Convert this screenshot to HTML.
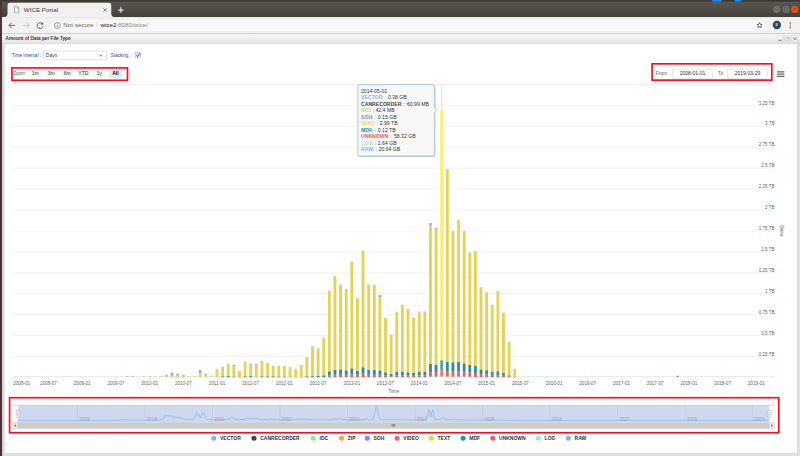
<!DOCTYPE html>
<html lang="en"><head><meta charset="utf-8"><title>WICE Portal</title>
<style>
html,body{margin:0;padding:0;width:800px;height:456px;overflow:hidden;background:#fff;}
body{font-family:"Liberation Sans",Arial,sans-serif;}
#root{position:absolute;left:0;top:0;width:1920px;height:1095px;transform:scale(0.4166667);transform-origin:0 0;overflow:hidden;background:#dfdfdf;}
#root *{box-sizing:border-box;}
.abs{position:absolute;}
.topstrip{left:0;top:0;width:1920px;height:4px;background:#3a3935;}
.titlebar{left:0;top:0px;width:1920px;height:42px;background:linear-gradient(#59564e 4px,#44423c 40px);}
.leftstrip{left:0;top:5px;width:4.8px;height:1090px;background:#4b3339;}
.tab{left:18px;top:6px;width:249px;height:35px;}
.tab .ttl{left:39px;top:8px;font-size:15px;color:#3b3b3b;white-space:nowrap;}
.toolbar{left:4.8px;top:40.5px;width:1916px;height:41px;background:#f2f1f0;border-bottom:2px solid #c0c0c0;}
.pill{left:116px;top:7px;width:1719px;height:27px;border-radius:14px;background:#f8f8f8;}
.url{left:241px;top:47px;font-size:15px;color:#222;white-space:nowrap;line-height:26px;}
.url span{color:#8a8a8a;}
.notsec{left:152px;top:47px;font-size:15px;color:#5f6368;white-space:nowrap;line-height:26px;}
.phead{left:4.8px;top:81.5px;width:1916px;border-top:1px solid #fcfcfc;height:23px;background:linear-gradient(#f6f6f6,#e4e4e4);border-bottom:1.5px solid #c4c4c4;}
.phead .t{left:8.5px;top:3px;font-size:11.3px;font-weight:bold;color:#333;white-space:nowrap;}
.pbody{left:10px;top:103.5px;width:1904px;height:984.5px;background:#fff;border:1px solid #c4c4c4;}
.lbl{font-size:11px;color:#1d4a8a;white-space:nowrap;}
.sel{left:104px;top:121.5px;width:152px;height:22px;border:1px solid #b5b8c8;background:#fff;border-radius:2px;font-size:12px;color:#444;line-height:20px;padding-left:5px;}
.cb{left:324px;top:125px;width:14px;height:14px;border:1px solid #8c9cb4;background:linear-gradient(#d8e2f0,#eef2f9);}
svg.chart{position:absolute;left:0;top:0;}
.wb{border-radius:50%;width:17px;height:17px;top:14px;}
</style></head><body>
<div id="root">
<div class="abs titlebar"></div>
<div class="abs topstrip"></div>
<div class="abs" style="left:1709px;top:0;width:23px;height:3.5px;background:#1583e9;border-radius:0 0 2px 2px"></div>
<div class="abs" style="left:1763px;top:0;width:16px;height:3.5px;background:#1583e9;border-radius:0 0 2px 2px"></div>
<div class="abs leftstrip"></div>
<div class="abs tab">
 <svg class="abs" style="left:-10px;top:0" width="269" height="35" viewBox="-10 0 269 35"><path d="M-8 35Q0 35 0 27V8Q0 0 8 0H241Q249 0 249 8V27Q249 35 257 35Z" fill="#f2f1f0"/></svg>
 <svg class="abs" style="left:15px;top:9px" width="14" height="17" viewBox="0 0 14 17"><path d="M1.5 1h7l4 4v11h-11z" fill="#fff" stroke="#666" stroke-width="1.4"/><path d="M8.5 1v4h4" fill="none" stroke="#666" stroke-width="1.2"/></svg>
 <div class="abs ttl">WICE Portal</div>
 <svg class="abs" style="left:228.5px;top:13px" width="10" height="10" viewBox="0 0 10 10"><path d="M1 1l8 8M9 1l-8 8" stroke="#555" stroke-width="1.6"/></svg>
</div>
<svg class="abs" style="left:282px;top:15.5px" width="16" height="16" viewBox="0 0 16 16"><path d="M8 1.5v13M1.500 8h13" stroke="#e2e0dc" stroke-width="3"/></svg>
<div class="abs wb" style="left:1856px;background:#74716a"></div>
<div class="abs wb" style="left:1878px;background:#74716a"></div>
<div class="abs wb" style="left:1899px;background:#e9541f"></div>
<svg class="abs" style="left:1856px;top:14px" width="60" height="17" viewBox="0 0 60 17"><path d="M5 9h7" stroke="#55524c" stroke-width="1.5"/><rect x="27" y="5" width="7" height="7" fill="none" stroke="#55524c" stroke-width="1.3"/><path d="M48.5 5.5l6 6M54.5 5.5l-6 6" stroke="#5a2410" stroke-width="1.6"/></svg>
<div class="abs toolbar"><div class="abs pill"></div></div>
<svg class="abs" style="left:15.5px;top:49.5px" width="130" height="22" viewBox="0 0 130 22" fill="none">
 <path d="M20 11H6M12 4.5L5.5 11l6.500 6.500" stroke="#4a4a4a" stroke-width="2"/>
 <path d="M40 11h14M48 4.500l6.500 6.500l-6.500 6.500" stroke="#bdbdbd" stroke-width="2"/>
 <path d="M85 6.500A7 7 0 1 0 87 13" stroke="#4a4a4a" stroke-width="2"/><path d="M87.500 3v6h-6z" fill="#4a4a4a"/>
 <circle cx="121.500" cy="11" r="7.200" stroke="#5f6368" stroke-width="1.5"/><path d="M121.500 10v5M121.500 6.500v1.600" stroke="#5f6368" stroke-width="1.6"/>
</svg>
<div class="abs notsec">Not secure</div>
<div class="abs" style="left:232px;top:52px;width:1px;height:17px;background:#c4c4c4"></div>
<div class="abs url">wice2<span>:8080/wice/</span></div>
<svg class="abs" style="left:1809.5px;top:47px" width="110" height="26" viewBox="0 0 110 26" fill="none">
 <g transform="translate(13 13.5) scale(0.72) translate(-13 -13)"><path d="M13 4.500l2.600 5.600l6 .700l-4.500 4.100l1.300 6l-5.400 -3.100l-5.400 3.100l1.300 -6l-4.500 -4.100l6 -.700z" stroke="#3c3c3c" stroke-width="2.400" stroke-linejoin="round"/></g>
 <circle cx="54.5" cy="13" r="10" fill="#2f4858"/>
 <circle cx="86.5" cy="8" r="1.700" fill="#4a4a4a"/><circle cx="86.5" cy="13.2" r="1.700" fill="#4a4a4a"/><circle cx="86.5" cy="18.4" r="1.700" fill="#4a4a4a"/>
</svg>
<div class="abs" style="left:1859px;top:53.5px;width:10px;font-size:9px;font-weight:bold;color:#cfd8dc;text-align:center;line-height:13px">E</div>
<div class="abs phead"><div class="abs t">Amount of Data per File Type</div>
 <svg class="abs" style="left:1859px;top:2px" width="58" height="18" viewBox="0 0 58 18" fill="none"><rect x=".5" y=".5" width="15" height="15" rx="2" fill="#f4f4f4" stroke="#c0c0c0"/><rect x="18.500" y=".5" width="15" height="15" rx="2" fill="#f4f4f4" stroke="#c0c0c0"/><rect x="36.500" y=".5" width="15" height="15" rx="2" fill="#f4f4f4" stroke="#c0c0c0"/><path d="M4 11.500h8" stroke="#555" stroke-width="2"/><path d="M22 6.500h6v6h-6zM24 6V4h6v6h-2" stroke="#999" stroke-width="1"/><path d="M40.500 4.500l7 7M47.500 4.500l-7 7" stroke="#555" stroke-width="1.600"/></svg>
</div>
<div class="abs pbody"></div>
<div class="abs lbl" style="left:29px;top:126px">Time Interval :</div>
<div class="abs sel">Days<svg class="abs" style="left:133px;top:7px" width="9" height="7" viewBox="0 0 9 7"><path d="M1 1l3.500 4l3.500 -4" fill="none" stroke="#333" stroke-width="1.600"/></svg></div>
<div class="abs lbl" style="left:266px;top:126px">Stacking :</div>
<div class="abs cb"><svg class="abs" style="left:1px;top:0px" width="11" height="12" viewBox="0 0 11 12"><path d="M1.500 6.500l3 3.500l5 -8.500" fill="none" stroke="#1d3f7a" stroke-width="1.800"/></svg></div>
<svg class="chart" width="1920" height="1094" viewBox="0 0 1920 1094" font-family="Liberation Sans, Arial, sans-serif">
<path d="M30 855.49H1859" stroke="#e3e3e3" stroke-width="1.2"/>
<path d="M30 805.28H1859" stroke="#e3e3e3" stroke-width="1.2"/>
<path d="M30 755.07H1859" stroke="#e3e3e3" stroke-width="1.2"/>
<path d="M30 704.86H1859" stroke="#e3e3e3" stroke-width="1.2"/>
<path d="M30 654.65H1859" stroke="#e3e3e3" stroke-width="1.2"/>
<path d="M30 604.44H1859" stroke="#e3e3e3" stroke-width="1.2"/>
<path d="M30 554.23H1859" stroke="#e3e3e3" stroke-width="1.2"/>
<path d="M30 504.02H1859" stroke="#e3e3e3" stroke-width="1.2"/>
<path d="M30 453.81H1859" stroke="#e3e3e3" stroke-width="1.2"/>
<path d="M30 403.6H1859" stroke="#e3e3e3" stroke-width="1.2"/>
<path d="M30 353.39H1859" stroke="#e3e3e3" stroke-width="1.2"/>
<path d="M30 303.18H1859" stroke="#e3e3e3" stroke-width="1.2"/>
<path d="M30 252.97H1859" stroke="#e3e3e3" stroke-width="1.2"/>
<path d="M30 202.76H1859" stroke="#e3e3e3" stroke-width="1.2"/>
<path d="M1060.06 202.76V904.0" stroke="#cccccc" stroke-width="1.4"/>
<path d="M30 904.0H1859" stroke="#ccd6eb" stroke-width="1.4"/>
<path d="M35.52 904.0v10" stroke="#ccd6eb" stroke-width="1.2"/>
<text x="52.02" y="924.0" text-anchor="middle" font-size="11" fill="#666">2008-01</text>
<path d="M116.4 904.0v10" stroke="#ccd6eb" stroke-width="1.2"/>
<text x="116.4" y="924.0" text-anchor="middle" font-size="11" fill="#666">2008-07</text>
<path d="M197.29 904.0v10" stroke="#ccd6eb" stroke-width="1.2"/>
<text x="197.29" y="924.0" text-anchor="middle" font-size="11" fill="#666">2009-01</text>
<path d="M278.17 904.0v10" stroke="#ccd6eb" stroke-width="1.2"/>
<text x="278.17" y="924.0" text-anchor="middle" font-size="11" fill="#666">2009-07</text>
<path d="M359.06 904.0v10" stroke="#ccd6eb" stroke-width="1.2"/>
<text x="359.06" y="924.0" text-anchor="middle" font-size="11" fill="#666">2010-01</text>
<path d="M439.94 904.0v10" stroke="#ccd6eb" stroke-width="1.2"/>
<text x="439.94" y="924.0" text-anchor="middle" font-size="11" fill="#666">2010-07</text>
<path d="M520.83 904.0v10" stroke="#ccd6eb" stroke-width="1.2"/>
<text x="520.83" y="924.0" text-anchor="middle" font-size="11" fill="#666">2011-01</text>
<path d="M601.71 904.0v10" stroke="#ccd6eb" stroke-width="1.2"/>
<text x="601.71" y="924.0" text-anchor="middle" font-size="11" fill="#666">2011-07</text>
<path d="M682.6 904.0v10" stroke="#ccd6eb" stroke-width="1.2"/>
<text x="682.6" y="924.0" text-anchor="middle" font-size="11" fill="#666">2012-01</text>
<path d="M763.48 904.0v10" stroke="#ccd6eb" stroke-width="1.2"/>
<text x="763.48" y="924.0" text-anchor="middle" font-size="11" fill="#666">2012-07</text>
<path d="M844.37 904.0v10" stroke="#ccd6eb" stroke-width="1.2"/>
<text x="844.37" y="924.0" text-anchor="middle" font-size="11" fill="#666">2013-01</text>
<path d="M925.25 904.0v10" stroke="#ccd6eb" stroke-width="1.2"/>
<text x="925.25" y="924.0" text-anchor="middle" font-size="11" fill="#666">2013-07</text>
<path d="M1006.14 904.0v10" stroke="#ccd6eb" stroke-width="1.2"/>
<text x="1006.14" y="924.0" text-anchor="middle" font-size="11" fill="#666">2014-01</text>
<path d="M1087.02 904.0v10" stroke="#ccd6eb" stroke-width="1.2"/>
<text x="1087.02" y="924.0" text-anchor="middle" font-size="11" fill="#666">2014-07</text>
<path d="M1167.91 904.0v10" stroke="#ccd6eb" stroke-width="1.2"/>
<text x="1167.91" y="924.0" text-anchor="middle" font-size="11" fill="#666">2015-01</text>
<path d="M1248.79 904.0v10" stroke="#ccd6eb" stroke-width="1.2"/>
<text x="1248.79" y="924.0" text-anchor="middle" font-size="11" fill="#666">2015-07</text>
<path d="M1329.68 904.0v10" stroke="#ccd6eb" stroke-width="1.2"/>
<text x="1329.68" y="924.0" text-anchor="middle" font-size="11" fill="#666">2016-01</text>
<path d="M1410.56 904.0v10" stroke="#ccd6eb" stroke-width="1.2"/>
<text x="1410.56" y="924.0" text-anchor="middle" font-size="11" fill="#666">2016-07</text>
<path d="M1491.45 904.0v10" stroke="#ccd6eb" stroke-width="1.2"/>
<text x="1491.45" y="924.0" text-anchor="middle" font-size="11" fill="#666">2017-01</text>
<path d="M1572.33 904.0v10" stroke="#ccd6eb" stroke-width="1.2"/>
<text x="1572.33" y="924.0" text-anchor="middle" font-size="11" fill="#666">2017-07</text>
<path d="M1653.22 904.0v10" stroke="#ccd6eb" stroke-width="1.2"/>
<text x="1653.22" y="924.0" text-anchor="middle" font-size="11" fill="#666">2018-01</text>
<path d="M1734.1 904.0v10" stroke="#ccd6eb" stroke-width="1.2"/>
<text x="1734.1" y="924.0" text-anchor="middle" font-size="11" fill="#666">2018-07</text>
<path d="M1814.99 904.0v10" stroke="#ccd6eb" stroke-width="1.2"/>
<text x="1814.99" y="924.0" text-anchor="middle" font-size="11" fill="#666">2019-01</text>
<text x="1859" y="853.49" text-anchor="end" font-size="11" fill="#666">0.25 TB</text>
<text x="1859" y="803.28" text-anchor="end" font-size="11" fill="#666">0.5 TB</text>
<text x="1859" y="753.07" text-anchor="end" font-size="11" fill="#666">0.75 TB</text>
<text x="1859" y="702.86" text-anchor="end" font-size="11" fill="#666">1 TB</text>
<text x="1859" y="652.65" text-anchor="end" font-size="11" fill="#666">1.25 TB</text>
<text x="1859" y="602.44" text-anchor="end" font-size="11" fill="#666">1.5 TB</text>
<text x="1859" y="552.23" text-anchor="end" font-size="11" fill="#666">1.75 TB</text>
<text x="1859" y="502.02" text-anchor="end" font-size="11" fill="#666">2 TB</text>
<text x="1859" y="451.81" text-anchor="end" font-size="11" fill="#666">2.25 TB</text>
<text x="1859" y="401.6" text-anchor="end" font-size="11" fill="#666">2.5 TB</text>
<text x="1859" y="351.39" text-anchor="end" font-size="11" fill="#666">2.75 TB</text>
<text x="1859" y="301.18" text-anchor="end" font-size="11" fill="#666">3 TB</text>
<text x="1859" y="250.97" text-anchor="end" font-size="11" fill="#666">3.25 TB</text>
<rect x="301.74" y="902.56" width="6.8" height="1.44" fill="#7cb5ec"/>
<rect x="315.22" y="902.56" width="6.8" height="1.44" fill="#7cb5ec"/>
<rect x="342.18" y="902.56" width="6.8" height="1.44" fill="#e4d354"/>
<rect x="355.66" y="902.56" width="6.8" height="1.44" fill="#e4d354"/>
<rect x="369.14" y="902.8" width="6.8" height="1.2" fill="#e4d354"/>
<rect x="382.62" y="902.8" width="6.8" height="1.2" fill="#e4d354"/>
<rect x="396.1" y="901.6" width="6.8" height="3.9" fill="#e4d354"/>
<rect x="396.1" y="899.2" width="6.8" height="2.4" fill="#7cb5ec"/>
<rect x="409.58" y="901.6" width="6.8" height="3.9" fill="#e4d354"/>
<rect x="409.58" y="894.4" width="6.8" height="7.2" fill="#7cb5ec"/>
<rect x="423.06" y="900.4" width="6.8" height="5.1" fill="#e4d354"/>
<rect x="423.06" y="896.8" width="6.8" height="3.6" fill="#7cb5ec"/>
<rect x="436.54" y="901.12" width="6.8" height="4.38" fill="#e4d354"/>
<rect x="436.54" y="899.2" width="6.8" height="1.92" fill="#7cb5ec"/>
<rect x="450.02" y="902.32" width="6.8" height="1.68" fill="#e4d354"/>
<rect x="463.51" y="902.32" width="6.8" height="1.68" fill="#e4d354"/>
<rect x="476.99" y="895.6" width="6.8" height="9.9" fill="#e4d354"/>
<rect x="476.99" y="888.4" width="6.8" height="7.2" fill="#7cb5ec"/>
<rect x="490.47" y="899.2" width="6.8" height="6.3" fill="#e4d354"/>
<rect x="490.47" y="896.8" width="6.8" height="2.4" fill="#7cb5ec"/>
<rect x="503.95" y="901.6" width="6.8" height="2.4" fill="#e4d354"/>
<rect x="517.43" y="886" width="6.8" height="19.5" fill="#e4d354"/>
<rect x="530.91" y="903.1" width="6.8" height="2.4" fill="#2b908f"/>
<rect x="530.91" y="880" width="6.8" height="23.1" fill="#e4d354"/>
<rect x="544.39" y="902.62" width="6.8" height="2.88" fill="#2b908f"/>
<rect x="544.39" y="872.8" width="6.8" height="29.82" fill="#e4d354"/>
<rect x="557.87" y="903.58" width="6.8" height="1.92" fill="#2b908f"/>
<rect x="557.87" y="878.2" width="6.8" height="25.38" fill="#e4d354"/>
<rect x="557.87" y="875.8" width="6.8" height="2.4" fill="#7cb5ec"/>
<rect x="571.35" y="904.54" width="6.8" height="0.96" fill="#2b908f"/>
<rect x="571.35" y="890.2" width="6.8" height="14.34" fill="#e4d354"/>
<rect x="584.83" y="903.1" width="6.8" height="2.4" fill="#2b908f"/>
<rect x="584.83" y="869.44" width="6.8" height="33.66" fill="#e4d354"/>
<rect x="584.83" y="868" width="6.8" height="1.44" fill="#7cb5ec"/>
<rect x="598.31" y="902.62" width="6.8" height="2.88" fill="#2b908f"/>
<rect x="598.31" y="874.72" width="6.8" height="27.9" fill="#e4d354"/>
<rect x="598.31" y="872.8" width="6.8" height="1.92" fill="#7cb5ec"/>
<rect x="611.79" y="904.3" width="6.8" height="1.2" fill="#2b908f"/>
<rect x="611.79" y="874.72" width="6.8" height="29.58" fill="#e4d354"/>
<rect x="611.79" y="872.8" width="6.8" height="1.92" fill="#7cb5ec"/>
<rect x="625.28" y="903.1" width="6.8" height="2.4" fill="#2b908f"/>
<rect x="625.28" y="868.72" width="6.8" height="34.38" fill="#e4d354"/>
<rect x="625.28" y="866.8" width="6.8" height="1.92" fill="#7cb5ec"/>
<rect x="638.76" y="903.1" width="6.8" height="2.4" fill="#2b908f"/>
<rect x="638.76" y="871" width="6.8" height="32.1" fill="#e4d354"/>
<rect x="652.24" y="903.1" width="6.8" height="2.4" fill="#2b908f"/>
<rect x="652.24" y="877.6" width="6.8" height="25.5" fill="#e4d354"/>
<rect x="665.72" y="903.58" width="6.8" height="1.92" fill="#2b908f"/>
<rect x="665.72" y="877.6" width="6.8" height="25.98" fill="#e4d354"/>
<rect x="679.2" y="903.58" width="6.8" height="1.92" fill="#2b908f"/>
<rect x="679.2" y="878.8" width="6.8" height="24.78" fill="#e4d354"/>
<rect x="692.68" y="904.06" width="6.8" height="1.44" fill="#2b908f"/>
<rect x="692.68" y="881.2" width="6.8" height="22.86" fill="#e4d354"/>
<rect x="706.16" y="904.54" width="6.8" height="0.96" fill="#2b908f"/>
<rect x="706.16" y="886" width="6.8" height="18.54" fill="#e4d354"/>
<rect x="719.64" y="904.3" width="6.8" height="1.2" fill="#2b908f"/>
<rect x="719.64" y="877.6" width="6.8" height="26.7" fill="#e4d354"/>
<rect x="719.64" y="876.4" width="6.8" height="1.2" fill="#7cb5ec"/>
<rect x="733.12" y="903.1" width="6.8" height="2.4" fill="#2b908f"/>
<rect x="733.12" y="858.4" width="6.8" height="44.7" fill="#e4d354"/>
<rect x="733.12" y="857.2" width="6.8" height="1.2" fill="#7cb5ec"/>
<rect x="746.6" y="902.62" width="6.8" height="2.88" fill="#2b908f"/>
<rect x="746.6" y="832.24" width="6.8" height="70.38" fill="#e4d354"/>
<rect x="746.6" y="830.8" width="6.8" height="1.44" fill="#7cb5ec"/>
<rect x="760.08" y="901.9" width="6.8" height="3.6" fill="#2b908f"/>
<rect x="760.08" y="835.6" width="6.8" height="66.3" fill="#e4d354"/>
<rect x="773.56" y="900.7" width="6.8" height="4.8" fill="#2b908f"/>
<rect x="773.56" y="810.4" width="6.8" height="90.3" fill="#e4d354"/>
<rect x="787.04" y="900.7" width="6.8" height="4.8" fill="#f45b5b"/>
<rect x="787.04" y="891.1" width="6.8" height="9.6" fill="#2b908f"/>
<rect x="787.04" y="697.6" width="6.8" height="193.5" fill="#e4d354"/>
<rect x="800.53" y="899.5" width="6.8" height="6" fill="#f45b5b"/>
<rect x="800.53" y="887.5" width="6.8" height="12" fill="#2b908f"/>
<rect x="800.53" y="662.8" width="6.8" height="224.7" fill="#e4d354"/>
<rect x="814.01" y="899.5" width="6.8" height="6" fill="#f45b5b"/>
<rect x="814.01" y="886.3" width="6.8" height="13.2" fill="#2b908f"/>
<rect x="814.01" y="684.4" width="6.8" height="201.9" fill="#e4d354"/>
<rect x="814.01" y="683.2" width="6.8" height="1.2" fill="#7cb5ec"/>
<rect x="827.49" y="899.5" width="6.8" height="6" fill="#f45b5b"/>
<rect x="827.49" y="888.7" width="6.8" height="10.8" fill="#2b908f"/>
<rect x="827.49" y="695.2" width="6.8" height="193.5" fill="#e4d354"/>
<rect x="827.49" y="694" width="6.8" height="1.2" fill="#7cb5ec"/>
<rect x="840.97" y="898.3" width="6.8" height="7.2" fill="#f45b5b"/>
<rect x="840.97" y="883.9" width="6.8" height="14.4" fill="#2b908f"/>
<rect x="840.97" y="628" width="6.8" height="255.9" fill="#e4d354"/>
<rect x="854.45" y="899.5" width="6.8" height="6" fill="#f45b5b"/>
<rect x="854.45" y="889.9" width="6.8" height="9.6" fill="#2b908f"/>
<rect x="854.45" y="715.6" width="6.8" height="174.3" fill="#e4d354"/>
<rect x="867.93" y="897.1" width="6.8" height="8.4" fill="#f45b5b"/>
<rect x="867.93" y="881.5" width="6.8" height="15.6" fill="#2b908f"/>
<rect x="867.93" y="601.6" width="6.8" height="279.9" fill="#e4d354"/>
<rect x="881.41" y="899.5" width="6.8" height="6" fill="#f45b5b"/>
<rect x="881.41" y="887.5" width="6.8" height="12" fill="#2b908f"/>
<rect x="881.41" y="682" width="6.8" height="205.5" fill="#e4d354"/>
<rect x="894.89" y="899.5" width="6.8" height="6" fill="#f45b5b"/>
<rect x="894.89" y="887.5" width="6.8" height="12" fill="#2b908f"/>
<rect x="894.89" y="683.2" width="6.8" height="204.3" fill="#e4d354"/>
<rect x="908.37" y="899.5" width="6.8" height="6" fill="#f45b5b"/>
<rect x="908.37" y="888.7" width="6.8" height="10.8" fill="#2b908f"/>
<rect x="908.37" y="713.2" width="6.8" height="175.5" fill="#e4d354"/>
<rect x="908.37" y="708.4" width="6.8" height="4.8" fill="#7cb5ec"/>
<rect x="921.85" y="900.7" width="6.8" height="4.8" fill="#f45b5b"/>
<rect x="921.85" y="893.5" width="6.8" height="7.2" fill="#2b908f"/>
<rect x="921.85" y="763.6" width="6.8" height="129.9" fill="#e4d354"/>
<rect x="935.33" y="903.1" width="6.8" height="2.4" fill="#f45b5b"/>
<rect x="935.33" y="897.1" width="6.8" height="6" fill="#2b908f"/>
<rect x="935.33" y="804.4" width="6.8" height="92.7" fill="#e4d354"/>
<rect x="935.33" y="803.2" width="6.8" height="1.2" fill="#7cb5ec"/>
<rect x="948.81" y="900.7" width="6.8" height="4.8" fill="#f45b5b"/>
<rect x="948.81" y="892.3" width="6.8" height="8.4" fill="#2b908f"/>
<rect x="948.81" y="748" width="6.8" height="144.3" fill="#e4d354"/>
<rect x="962.3" y="900.7" width="6.8" height="4.8" fill="#f45b5b"/>
<rect x="962.3" y="892.3" width="6.8" height="8.4" fill="#2b908f"/>
<rect x="962.3" y="733.6" width="6.8" height="158.7" fill="#e4d354"/>
<rect x="962.3" y="732.4" width="6.8" height="1.2" fill="#7cb5ec"/>
<rect x="975.78" y="900.7" width="6.8" height="4.8" fill="#f45b5b"/>
<rect x="975.78" y="893.5" width="6.8" height="7.2" fill="#2b908f"/>
<rect x="975.78" y="740.8" width="6.8" height="152.7" fill="#e4d354"/>
<rect x="989.26" y="901.9" width="6.8" height="3.6" fill="#f45b5b"/>
<rect x="989.26" y="894.7" width="6.8" height="7.2" fill="#2b908f"/>
<rect x="989.26" y="762.4" width="6.8" height="132.3" fill="#e4d354"/>
<rect x="1002.74" y="901.18" width="6.8" height="4.32" fill="#f45b5b"/>
<rect x="1002.74" y="891.58" width="6.8" height="9.6" fill="#2b908f"/>
<rect x="1002.74" y="749.68" width="6.8" height="141.9" fill="#e4d354"/>
<rect x="1002.74" y="748" width="6.8" height="1.68" fill="#7cb5ec"/>
<rect x="1016.22" y="901.18" width="6.8" height="4.32" fill="#f45b5b"/>
<rect x="1016.22" y="891.58" width="6.8" height="9.6" fill="#2b908f"/>
<rect x="1016.22" y="749.68" width="6.8" height="141.9" fill="#e4d354"/>
<rect x="1016.22" y="748" width="6.8" height="1.68" fill="#7cb5ec"/>
<rect x="1029.7" y="902.86" width="6.8" height="2.64" fill="#7cb5ec"/>
<rect x="1029.7" y="893.02" width="6.8" height="9.84" fill="#f45b5b"/>
<rect x="1029.7" y="872.86" width="6.8" height="20.16" fill="#2b908f"/>
<rect x="1029.7" y="540.4" width="6.8" height="332.46" fill="#e4d354"/>
<rect x="1029.7" y="535.6" width="6.8" height="4.8" fill="#7cb5ec"/>
<rect x="1043.18" y="902.86" width="6.8" height="2.64" fill="#7cb5ec"/>
<rect x="1043.18" y="893.02" width="6.8" height="9.84" fill="#f45b5b"/>
<rect x="1043.18" y="875.5" width="6.8" height="17.52" fill="#2b908f"/>
<rect x="1043.18" y="551.2" width="6.8" height="324.3" fill="#e4d354"/>
<rect x="1043.18" y="547.6" width="6.8" height="3.6" fill="#7cb5ec"/>
<rect x="1056.66" y="902.38" width="6.8" height="3.12" fill="#95c8f2"/>
<rect x="1056.66" y="887.98" width="6.8" height="14.4" fill="#ff7474"/>
<rect x="1056.66" y="864.46" width="6.8" height="23.52" fill="#44a9a8"/>
<rect x="1056.66" y="264.4" width="6.8" height="600.06" fill="#fdec6d"/>
<rect x="1070.14" y="902.86" width="6.8" height="2.64" fill="#7cb5ec"/>
<rect x="1070.14" y="890.62" width="6.8" height="12.24" fill="#f45b5b"/>
<rect x="1070.14" y="867.82" width="6.8" height="22.8" fill="#2b908f"/>
<rect x="1070.14" y="406" width="6.8" height="461.82" fill="#e4d354"/>
<rect x="1083.62" y="902.86" width="6.8" height="2.64" fill="#7cb5ec"/>
<rect x="1083.62" y="890.86" width="6.8" height="12" fill="#f45b5b"/>
<rect x="1083.62" y="869.26" width="6.8" height="21.6" fill="#2b908f"/>
<rect x="1083.62" y="554.8" width="6.8" height="314.46" fill="#e4d354"/>
<rect x="1097.1" y="903.1" width="6.8" height="2.4" fill="#7cb5ec"/>
<rect x="1097.1" y="890.86" width="6.8" height="12.24" fill="#f45b5b"/>
<rect x="1097.1" y="868.06" width="6.8" height="22.8" fill="#2b908f"/>
<rect x="1097.1" y="527.2" width="6.8" height="340.86" fill="#e4d354"/>
<rect x="1110.58" y="903.34" width="6.8" height="2.16" fill="#7cb5ec"/>
<rect x="1110.58" y="892.3" width="6.8" height="11.04" fill="#f45b5b"/>
<rect x="1110.58" y="872.14" width="6.8" height="20.16" fill="#2b908f"/>
<rect x="1110.58" y="554.8" width="6.8" height="317.34" fill="#e4d354"/>
<rect x="1124.06" y="903.82" width="6.8" height="1.68" fill="#7cb5ec"/>
<rect x="1124.06" y="893.5" width="6.8" height="10.32" fill="#f45b5b"/>
<rect x="1124.06" y="875.98" width="6.8" height="17.52" fill="#2b908f"/>
<rect x="1124.06" y="606.4" width="6.8" height="269.58" fill="#e4d354"/>
<rect x="1137.55" y="904.54" width="6.8" height="0.96" fill="#7cb5ec"/>
<rect x="1137.55" y="894.94" width="6.8" height="9.6" fill="#f45b5b"/>
<rect x="1137.55" y="878.62" width="6.8" height="16.32" fill="#2b908f"/>
<rect x="1137.55" y="602.8" width="6.8" height="275.82" fill="#e4d354"/>
<rect x="1151.03" y="904.78" width="6.8" height="0.72" fill="#7cb5ec"/>
<rect x="1151.03" y="897.82" width="6.8" height="6.96" fill="#f45b5b"/>
<rect x="1151.03" y="886.54" width="6.8" height="11.28" fill="#2b908f"/>
<rect x="1151.03" y="689.2" width="6.8" height="197.34" fill="#e4d354"/>
<rect x="1164.51" y="904.78" width="6.8" height="0.72" fill="#7cb5ec"/>
<rect x="1164.51" y="899.02" width="6.8" height="5.76" fill="#f45b5b"/>
<rect x="1164.51" y="888.46" width="6.8" height="10.56" fill="#2b908f"/>
<rect x="1164.51" y="702.16" width="6.8" height="186.3" fill="#e4d354"/>
<rect x="1164.51" y="701.2" width="6.8" height="0.96" fill="#7cb5ec"/>
<rect x="1177.99" y="899.74" width="6.8" height="5.76" fill="#f45b5b"/>
<rect x="1177.99" y="891.58" width="6.8" height="8.16" fill="#2b908f"/>
<rect x="1177.99" y="732.16" width="6.8" height="159.42" fill="#e4d354"/>
<rect x="1191.47" y="899.74" width="6.8" height="5.76" fill="#f45b5b"/>
<rect x="1191.47" y="891.1" width="6.8" height="8.64" fill="#2b908f"/>
<rect x="1191.47" y="698.8" width="6.8" height="192.3" fill="#e4d354"/>
<rect x="1204.95" y="901.66" width="6.8" height="3.84" fill="#f45b5b"/>
<rect x="1204.95" y="894.7" width="6.8" height="6.96" fill="#2b908f"/>
<rect x="1204.95" y="750.4" width="6.8" height="144.3" fill="#e4d354"/>
<rect x="1218.43" y="903.58" width="6.8" height="1.92" fill="#f45b5b"/>
<rect x="1218.43" y="900.7" width="6.8" height="2.88" fill="#2b908f"/>
<rect x="1218.43" y="820" width="6.8" height="80.7" fill="#e4d354"/>
<rect x="1231.91" y="904.3" width="6.8" height="1.2" fill="#2b908f"/>
<rect x="1231.91" y="884.8" width="6.8" height="19.5" fill="#e4d354"/>
<rect x="1622.85" y="902.0" width="6.8" height="2" fill="#3c9f3c"/>
<text x="945" y="942.3" text-anchor="middle" font-size="12" fill="#666">Time</text>
<text transform="translate(1871 553) rotate(90)" text-anchor="middle" font-size="12" fill="#666">Data</text>
<rect x="43" y="972.5" width="1803" height="41.0" fill="#cdd9ee"/>
<path d="M186 972.5V1013.5" stroke="#b9c4d8" stroke-width="1.2"/>
<text x="190" y="1009.5" font-size="11" fill="#9aa3b3">2009</text>
<path d="M348 972.5V1013.5" stroke="#b9c4d8" stroke-width="1.2"/>
<text x="352" y="1009.5" font-size="11" fill="#9aa3b3">2010</text>
<path d="M510 972.5V1013.5" stroke="#b9c4d8" stroke-width="1.2"/>
<text x="514" y="1009.5" font-size="11" fill="#9aa3b3">2011</text>
<path d="M672 972.5V1013.5" stroke="#b9c4d8" stroke-width="1.2"/>
<text x="676" y="1009.5" font-size="11" fill="#9aa3b3">2012</text>
<path d="M834 972.5V1013.5" stroke="#b9c4d8" stroke-width="1.2"/>
<text x="838" y="1009.5" font-size="11" fill="#9aa3b3">2013</text>
<path d="M996 972.5V1013.5" stroke="#b9c4d8" stroke-width="1.2"/>
<text x="1000" y="1009.5" font-size="11" fill="#9aa3b3">2014</text>
<path d="M1158 972.5V1013.5" stroke="#b9c4d8" stroke-width="1.2"/>
<text x="1162" y="1009.5" font-size="11" fill="#9aa3b3">2015</text>
<path d="M1320 972.5V1013.5" stroke="#b9c4d8" stroke-width="1.2"/>
<text x="1324" y="1009.5" font-size="11" fill="#9aa3b3">2016</text>
<path d="M1482 972.5V1013.5" stroke="#b9c4d8" stroke-width="1.2"/>
<text x="1486" y="1009.5" font-size="11" fill="#9aa3b3">2017</text>
<path d="M1644 972.5V1013.5" stroke="#b9c4d8" stroke-width="1.2"/>
<text x="1648" y="1009.5" font-size="11" fill="#9aa3b3">2018</text>
<path d="M1806 972.5V1013.5" stroke="#b9c4d8" stroke-width="1.2"/>
<text x="1810" y="1009.5" font-size="11" fill="#9aa3b3">2019</text>
<path d="M43.2 1008.96 L283.2 1008.96 L288 1008.24 L292.8 1007.04 L302.4 1007.04 L307.2 1008.48 L345.6 1008.48 L384 1008 L393.6 1004.4 L396.96 995.04 L399.6 999.6 L402 995.52 L405.6 1000.32 L409.2 996.72 L412.8 1001.28 L417.6 999.84 L422.4 1002.72 L429.6 1001.52 L436.8 1004.64 L446.4 1007.04 L464.4 1007.04 L468 1003.2 L471.12 992.4 L473.52 989.76 L476.4 992.4 L479.52 1001.52 L482.4 1001.28 L485.52 992.16 L487.92 989.76 L490.56 993.6 L493.44 1004.64 L495.6 1006.8 L504 1007.52 L516 1007.04 L549.6 1006.56 L553.2 1001.52 L558 1001.52 L561.6 1006.08 L585.6 1007.04 L592.8 1004.64 L600 1005.36 L607.2 1003.68 L614.4 1004.64 L619.2 1003.2 L624 1007.04 L643.2 1007.52 L650.4 1005.6 L655.2 1007.52 L684 1007.52 L720 1006.08 L732 1005.12 L741.6 1006.32 L748.8 1007.52 L792 1007.52 L801.6 1004.64 L806.4 1007.04 L811.2 1004.16 L818.4 1005.12 L825.6 1007.52 L844.8 1007.52 L873.6 1007.52 L879.6 1003.92 L884.4 1007.52 L895.2 1007.04 L899.04 991.2 L903.36 974.4 L907.68 991.2 L911.52 1007.04 L948 1007.52 L1008 1007.52 L1022.4 1007.04 L1026.24 998.4 L1028.88 983.52 L1032 991.2 L1033.92 1000.8 L1035.84 991.2 L1038.24 982.8 L1041.6 998.4 L1045.2 1007.04 L1056 1006.56 L1063.2 1002.72 L1068 1005.6 L1075.2 1007.52 L1084.8 1007.52 L1089.6 1005.12 L1094.4 1007.52 L1128 1008 L1200 1008.48 L1248 1008.96 L1845.6 1008.96" fill="none" stroke="#86b4e6" stroke-width="1.6" stroke-linejoin="round"/>
<path d="M30 972.5H1859" stroke="#c4c4c4" stroke-width="1.6"/>
<rect x="30" y="1013.5" width="1829" height="15.099999999999909" fill="#f2f2f2"/>
<rect x="43" y="1013.5" width="1803" height="15.099999999999909" fill="#cccccc"/>
<rect x="30" y="1013.5" width="13" height="15.099999999999909" fill="#e6e6e6" stroke="#cccccc" stroke-width="1"/>
<rect x="1846" y="1013.5" width="13" height="15.099999999999909" fill="#e6e6e6" stroke="#cccccc" stroke-width="1"/>
<path d="M38 1018.5v5l-3.5 -2.5z" fill="#333"/>
<path d="M1851 1018.5v5l3.5 -2.5z" fill="#333"/>
<path d="M941 1018.0v6M944 1018.0v6M947 1018.0v6" stroke="#333" stroke-width="1.2"/>
<rect x="38.5" y="985" width="9.5" height="16.5" rx="2" fill="#f2f2f2" stroke="#999999" stroke-width="1"/>
<path d="M42 990v7M44 990v7" stroke="#999" stroke-width="0.8"/>
<rect x="1841.5" y="985" width="9.5" height="16.5" rx="2" fill="#f2f2f2" stroke="#999999" stroke-width="1"/>
<path d="M1845 990v7M1847 990v7" stroke="#999" stroke-width="0.8"/>
<circle cx="513" cy="1052" r="6" fill="#7cb5ec"/>
<text x="528" y="1056.5" font-size="12" font-weight="bold" fill="#333">VECTOR</text>
<circle cx="609.6" cy="1052" r="6" fill="#434348"/>
<text x="624.6" y="1056.5" font-size="12" font-weight="bold" fill="#333">CANRECORDER</text>
<circle cx="751.8" cy="1052" r="6" fill="#90ed7d"/>
<text x="766.8" y="1056.5" font-size="12" font-weight="bold" fill="#333">IDC</text>
<circle cx="819.6" cy="1052" r="6" fill="#f7a35c"/>
<text x="834.6" y="1056.5" font-size="12" font-weight="bold" fill="#333">ZIP</text>
<circle cx="881.4" cy="1052" r="6" fill="#8085e9"/>
<text x="896.4" y="1056.5" font-size="12" font-weight="bold" fill="#333">SOH</text>
<circle cx="953" cy="1052" r="6" fill="#f15c80"/>
<text x="968" y="1056.5" font-size="12" font-weight="bold" fill="#333">VIDEO</text>
<circle cx="1035" cy="1052" r="6" fill="#e4d354"/>
<text x="1050" y="1056.5" font-size="12" font-weight="bold" fill="#333">TEXT</text>
<circle cx="1111.4" cy="1052" r="6" fill="#2b908f"/>
<text x="1126.4" y="1056.5" font-size="12" font-weight="bold" fill="#333">MDF</text>
<circle cx="1182.7" cy="1052" r="6" fill="#f45b5b"/>
<text x="1197.7" y="1056.5" font-size="12" font-weight="bold" fill="#333">UNKNOWN</text>
<circle cx="1292" cy="1052" r="6" fill="#91e8e1"/>
<text x="1307" y="1056.5" font-size="12" font-weight="bold" fill="#333">LOG</text>
<circle cx="1364" cy="1052" r="6" fill="#7cb5ec"/>
<text x="1379" y="1056.5" font-size="12" font-weight="bold" fill="#333">RAW</text>
<rect x="28.6" y="163" width="277.4" height="29.69999999999999" fill="none" stroke="#ff0a1e" stroke-width="4"/>
<rect x="1565" y="153.2" width="287.29999999999995" height="39.10000000000002" fill="none" stroke="#ff0a1e" stroke-width="4"/>
<rect x="23" y="954.5" width="1846" height="84.09999999999991" fill="none" stroke="#ff0a1e" stroke-width="4"/>
<text x="30.5" y="180.5" font-size="12" fill="#666">Zoom</text>
<rect x="68.6" y="167" width="32.4" height="20.5" rx="2" fill="#f7f7f7"/>
<text x="84.8" y="180.3" text-anchor="middle" font-size="12" fill="#333">1m</text>
<rect x="107.0" y="167" width="32.4" height="20.5" rx="2" fill="#f7f7f7"/>
<text x="123.2" y="180.3" text-anchor="middle" font-size="12" fill="#333">3m</text>
<rect x="145.39999999999998" y="167" width="32.4" height="20.5" rx="2" fill="#f7f7f7"/>
<text x="161.59999999999997" y="180.3" text-anchor="middle" font-size="12" fill="#333">6m</text>
<rect x="183.79999999999998" y="167" width="32.4" height="20.5" rx="2" fill="#f7f7f7"/>
<text x="199.99999999999997" y="180.3" text-anchor="middle" font-size="12" fill="#333">YTD</text>
<rect x="222.2" y="167" width="32.4" height="20.5" rx="2" fill="#f7f7f7"/>
<text x="238.39999999999998" y="180.3" text-anchor="middle" font-size="12" fill="#333">1y</text>
<rect x="260.6" y="167" width="32.4" height="20.5" rx="2" fill="#e6ebf5"/>
<text x="276.8" y="180.3" text-anchor="middle" font-size="12" fill="#000" font-weight="bold">All</text>
<text x="1574" y="180" font-size="12" fill="#666">From</text>
<rect x="1613.5" y="166.9" width="97" height="21" fill="#fff" stroke="#cccccc" stroke-width="1"/>
<text x="1662" y="181" text-anchor="middle" font-size="12" fill="#333">2008-01-01</text>
<text x="1723" y="180" font-size="12" fill="#666">To</text>
<rect x="1745.5" y="166.9" width="97" height="21" fill="#fff" stroke="#cccccc" stroke-width="1"/>
<text x="1794" y="181" text-anchor="middle" font-size="12" fill="#333">2019-03-29</text>
<path d="M1865 172.7h17.500M1865 178h17.500M1865 183.400h17.500" stroke="#666" stroke-width="3"/>
<g>
<rect x="860" y="204" width="183.5" height="171" rx="3" fill="none" stroke="#000" stroke-opacity="0.05" stroke-width="5"/>
<rect x="860" y="204" width="183.5" height="171" rx="3" fill="none" stroke="#000" stroke-opacity="0.1" stroke-width="3"/>
<rect x="860" y="204" width="183.5" height="171" rx="3" fill="none" stroke="#000" stroke-opacity="0.15" stroke-width="1"/>
<path d="M862 203H1039.5a3 3 0 0 1 3 3V258l6 6l-6 6V371a3 3 0 0 1 -3 3H862a3 3 0 0 1 -3 -3V206a3 3 0 0 1 3 -3z" fill="#f7f7f7" fill-opacity="0.88" stroke="#8fb8e4" stroke-width="1.4"/>
<text x="866.5" y="222.6" font-size="12.3" fill="#333">2014-05-01</text>
<text x="866.5" y="238.2" font-size="12.3" fill="#333"><tspan fill="#7cb5ec" font-weight="bold">VECTOR</tspan>: : 0.38 GB</text>
<text x="866.5" y="253.8" font-size="12.3" fill="#333"><tspan fill="#434348" font-weight="bold">CANRECORDER</tspan>: : 60.99 MB</text>
<text x="866.5" y="269.4" font-size="12.3" fill="#333"><tspan fill="#90ed7d" font-weight="bold">IDC</tspan>: : 42.4 MB</text>
<text x="866.5" y="285" font-size="12.3" fill="#333"><tspan fill="#8085e9" font-weight="bold">SOH</tspan>: : 0.15 GB</text>
<text x="866.5" y="300.6" font-size="12.3" fill="#333"><tspan fill="#e4d354" font-weight="bold">TEXT</tspan>: : 2.99 TB</text>
<text x="866.5" y="316.2" font-size="12.3" fill="#333"><tspan fill="#2b908f" font-weight="bold">MDF</tspan>: : 0.12 TB</text>
<text x="866.5" y="331.8" font-size="12.3" fill="#333"><tspan fill="#f45b5b" font-weight="bold">UNKNOWN</tspan>: : 58.32 GB</text>
<text x="866.5" y="347.4" font-size="12.3" fill="#333"><tspan fill="#91e8e1" font-weight="bold">LOG</tspan>: : 2.64 GB</text>
<text x="866.5" y="363" font-size="12.3" fill="#333"><tspan fill="#7cb5ec" font-weight="bold">RAW</tspan>: : 20.64 GB</text>
</g>
</svg>
</div>
</body></html>
